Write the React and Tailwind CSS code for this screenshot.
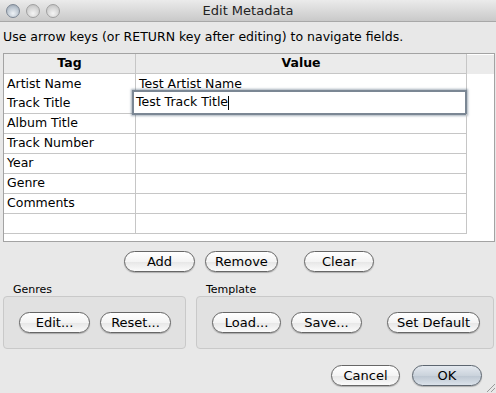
import React from 'react';

const font = { fontFamily: '"DejaVu Sans", "Lucida Grande", sans-serif' };

const Btn = ({ label, w, primary }) => (
  <div
    className={`h-[21px] rounded-full border flex items-center justify-center text-[13px] text-black shadow-[0_1px_1px_rgba(0,0,0,0.25)] ${
      primary
        ? 'border-[#5d6670] bg-[linear-gradient(#e4e9ef_0%,#cbd3dc_50%,#bcc6d1_51%,#dbe2ea_100%)]'
        : 'border-[#666666] bg-[linear-gradient(#ffffff_0%,#f4f4f4_50%,#e6e6e6_51%,#fbfbfb_100%)]'
    } ${w}`}
  >
    {label}
  </div>
);

const rows = [
  ['Artist Name', 'Test Artist Name'],
  ['Track Title', ''],
  ['Album Title', ''],
  ['Track Number', ''],
  ['Year', ''],
  ['Genre', ''],
  ['Comments', ''],
  ['', ''],
];

const Light = ({ first }) => (
  <div
    className={`w-[14px] h-[14px] rounded-full border ${
      first
        ? 'border-[#7d8794] bg-[radial-gradient(circle_at_50%_70%,#eef2f6_0%,#b9c3ce_60%,#8f9aa6_100%)]'
        : 'border-[#a0a0a0] bg-[radial-gradient(circle_at_50%_70%,#f4f4f4_0%,#d2d2d2_60%,#b8b8b8_100%)]'
    }`}
  />
);

export default function App() {
  return (
    <div className="w-[496px] h-[393px] bg-[#e8e8e8] flex flex-col overflow-hidden text-black" style={font}>
      <div className="h-[22px] shrink-0 relative flex items-center border-b border-[#a8a8a8] bg-[linear-gradient(#ebebeb,#c9c9c9)]">
        <div className="flex gap-[6px] pl-[6px]">
          <Light first />
          <Light />
          <Light />
        </div>
        <div className="absolute inset-0 flex items-center justify-center text-[13px] text-[#222]">Edit Metadata</div>
      </div>

      <div className="h-[31px] shrink-0 flex items-center pl-[3px] text-[12.5px]">
        Use arrow keys (or RETURN key after editing) to navigate fields.
      </div>

      <div className="ml-[3px] mr-[1px] h-[189px] shrink-0 border border-[#a3a3a3] bg-white flex flex-col text-[12.5px]">
        <div className="h-[20px] flex bg-[#ebebeb] font-bold">
          <div className="w-[132px] border-r border-b border-[#c6c6c6] flex items-center justify-center">Tag</div>
          <div className="w-[331px] border-r border-b border-[#c6c6c6] flex items-center justify-center">Value</div>
          <div className="flex-1 border-t border-white" />
        </div>
        {rows.map(([tag, val], i) => (
          <div key={i} className="h-[20px] flex">
            <div className={`w-[132px] border-r border-[#c6c6c6] flex items-center pl-[3px] ${i === 0 ? '' : 'border-b'}`}>{tag}</div>
            <div className={`w-[331px] border-r border-[#c6c6c6] flex items-center pl-[3px] relative ${i === 0 ? '' : 'border-b'}`}>
              {val}
              {i === 1 && (
                <div className="absolute left-[-4px] right-[-1px] top-[-4px] bottom-[-2px] bg-white border-2 border-[#7b8794] shadow-[0_0_2px_1px_rgba(80,100,120,0.5)] flex items-center pl-[2px]">
                  Test Track Title<span className="w-px h-[14px] bg-black" />
                </div>
              )}
            </div>
          </div>
        ))}
      </div>

      <div className="flex pl-[124px] pt-[9px] h-[30px] shrink-0">
        <Btn label="Add" w="w-[71px]" />
        <div className="w-[10px]" />
        <Btn label="Remove" w="w-[73px]" />
        <div className="w-[26px]" />
        <Btn label="Clear" w="w-[70px]" />
      </div>

      <div className="flex h-[24px] shrink-0 items-end pb-0 text-[11px] leading-[13px]">
        <div className="pl-[13px] w-[206px]">Genres</div>
        <div>Template</div>
      </div>

      <div className="flex h-[53px] shrink-0 pl-[3px] pr-[2px] gap-[10px]">
        <div className="w-[183px] rounded-[4px] border border-[#c9c9c9] bg-[#e1e1e1] flex items-center pl-[15px] gap-[10px]">
          <Btn label="Edit..." w="w-[71px]" />
          <Btn label="Reset..." w="w-[71px]" />
        </div>
        <div className="flex-1 rounded-[4px] border border-[#c9c9c9] bg-[#e1e1e1] flex items-center pl-[15px]">
          <Btn label="Load..." w="w-[69px]" />
          <div className="w-[10px]" />
          <Btn label="Save..." w="w-[71px]" />
          <div className="w-[25px]" />
          <Btn label="Set Default" w="w-[93px]" />
        </div>
      </div>

      <div className="flex pl-[331px] pt-[16px] relative flex-1">
        <Btn label="Cancel" w="w-[69px]" />
        <div className="w-[12px]" />
        <Btn label="OK" w="w-[70px]" primary />
        <svg className="absolute right-0 bottom-0" width="12" height="12" viewBox="0 0 12 12">
          <path d="M11 3 L3 11 M11 7 L7 11" stroke="#9a9a9a" strokeWidth="1" />
        </svg>
      </div>
    </div>
  );
}
